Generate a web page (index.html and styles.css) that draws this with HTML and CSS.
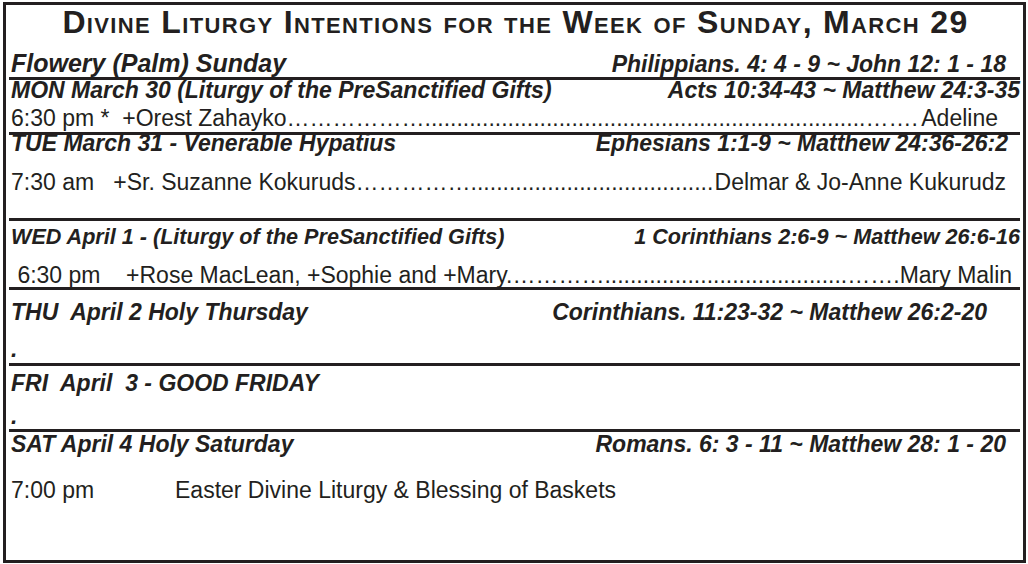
FILE: index.html
```html
<!DOCTYPE html>
<html lang="en">
<head>
<meta charset="utf-8">
<title>Divine Liturgy Intentions</title>
<link rel="stylesheet" href="styles.css">
</head>
<body>
<div class="sheet">
  <section class="sec sec-top">
    <h1 class="title">Divine Liturgy Intentions for the Week of Sunday, March 29</h1>
    <div class="head head-sun">
      <span class="day">Flowery (Palm) Sunday</span>
      <span class="ref ref-sun pr14">Philippians. 4: 4 - 9 ~ John 12: 1 - 18</span>
    </div>
  </section>

  <section class="sec sec-mon">
    <div class="head">
      <span class="day">MON March 30 (Liturgy of the PreSanctified Gifts)</span>
      <span class="ref">Acts 10:34-43 ~ Matthew 24:3-35</span>
    </div>
    <div class="line line-mon">
      <span class="who">6:30 pm *  +Orest Zahayko……………….....................................................................…….</span>
      <span class="end">Adeline</span>
    </div>
  </section>

  <section class="sec sec-tue">
    <div class="head">
      <span class="day">TUE March 31 - Venerable Hypatius</span>
      <span class="ref pr12">Ephesians 1:1-9 ~ Matthew 24:36-26:2</span>
    </div>
    <div class="line line-tue">
      <span class="who">7:30 am   +Sr. Suzanne Kokuruds……………......................................</span>
      <span class="end">Delmar &amp; Jo-Anne Kukurudz</span>
    </div>
  </section>

  <section class="sec sec-wed">
    <div class="head head-wed">
      <span class="day">WED April 1 - (Liturgy of the PreSanctified Gifts)</span>
      <span class="ref">1 Corinthians 2:6-9 ~ Matthew 26:6-16</span>
    </div>
    <div class="line line-wed">
      <span class="who"> 6:30 pm    +Rose MacLean, +Sophie and +Mary.…………......................................…….</span>
      <span class="end">Mary Malin</span>
    </div>
  </section>

  <section class="sec sec-thu">
    <div class="head">
      <span class="day">THU  April 2 Holy Thursday</span>
      <span class="ref pr33">Corinthians. 11:23-32 ~ Matthew 26:2-20</span>
    </div>
    <div class="mark mark-thu">.</div>
  </section>

  <section class="sec sec-fri">
    <div class="head">
      <span class="day">FRI  April  3 - GOOD FRIDAY</span>
    </div>
    <div class="mark mark-fri">.</div>
  </section>

  <section class="sec sec-sat">
    <div class="head">
      <span class="day">SAT April 4 Holy Saturday</span>
      <span class="ref pr14">Romans. 6: 3 - 11 ~ Matthew 28: 1 - 20</span>
    </div>
    <div class="line line-sat">
      <span class="time">7:00 pm</span>
      <span class="event">Easter Divine Liturgy &amp; Blessing of Baskets</span>
    </div>
  </section>
</div>
</body>
</html>
```

FILE: styles.css
```css
* { box-sizing: border-box; }

html, body {
  margin: 0;
  padding: 0;
  background: #ffffff;
}

body {
  font-family: "Liberation Sans", Arial, sans-serif;
  color: #231f20;
  padding: 2px 2px 1px 3px;
}

.sheet {
  width: 1023px;
  height: 561px;
  border: 3px solid #231f20;
  padding: 0 3px;
  display: flex;
  flex-direction: column;
}

.sec {
  display: flex;
  flex-direction: column;
  border-bottom: 3px solid #231f20;
  padding: 0 0 0 2px;
}

.sec-top { height: 75px; }
.sec-mon { height: 55px; }
.sec-tue { height: 86px; }
.sec-wed { height: 69px; }
.sec-thu { height: 76px; }
.sec-fri { height: 66px; }
.sec-sat { flex: 1; border-bottom: 0; }

.title {
  margin: 0;
  font-size: 32px;
  line-height: 34px;
  font-weight: bold;
  font-variant: small-caps;
  letter-spacing: 1.35px;
  text-align: center;
  white-space: nowrap;
}

.head {
  display: flex;
  justify-content: space-between;
  align-items: baseline;
  font-weight: bold;
  font-style: italic;
  font-size: 23px;
  line-height: 20px;
  white-space: pre;
}

.head-sun {
  font-size: 25px;
  line-height: 28px;
  margin-top: 10px;
}

.ref-sun { font-size: 23px; }

.head-wed { font-size: 21.6px; }

.pr12 { padding-right: 12px; }
.pr14 { padding-right: 14px; }
.pr33 { padding-right: 33px; }

.sec-mon .head { margin-top: 0; }
.sec-tue .head { margin-top: -2px; }
.sec-wed .head { margin-top: 6px; }
.sec-thu .head { margin-top: 12px; }
.sec-fri .head { margin-top: 7px; }
.sec-sat .head { margin-top: 2px; }

.line {
  display: flex;
  font-size: 23px;
  line-height: 24px;
  white-space: pre;
}

.line-mon { margin-top: 6px; padding-right: 22px; }
.line-tue { margin-top: 17px; padding-right: 14px; }
.line-wed { margin-top: 16px; padding-right: 9px; }
.line-sat { margin-top: 24px; }

.who { flex: none; }
.end { flex: none; margin-left: auto; }

.time { width: 164px; }

.mark {
  font-weight: bold;
  font-style: italic;
  font-size: 23px;
  line-height: 20px;
}

.mark-thu { margin-top: 17px; }
.mark-fri { margin-top: 13px; }
```
